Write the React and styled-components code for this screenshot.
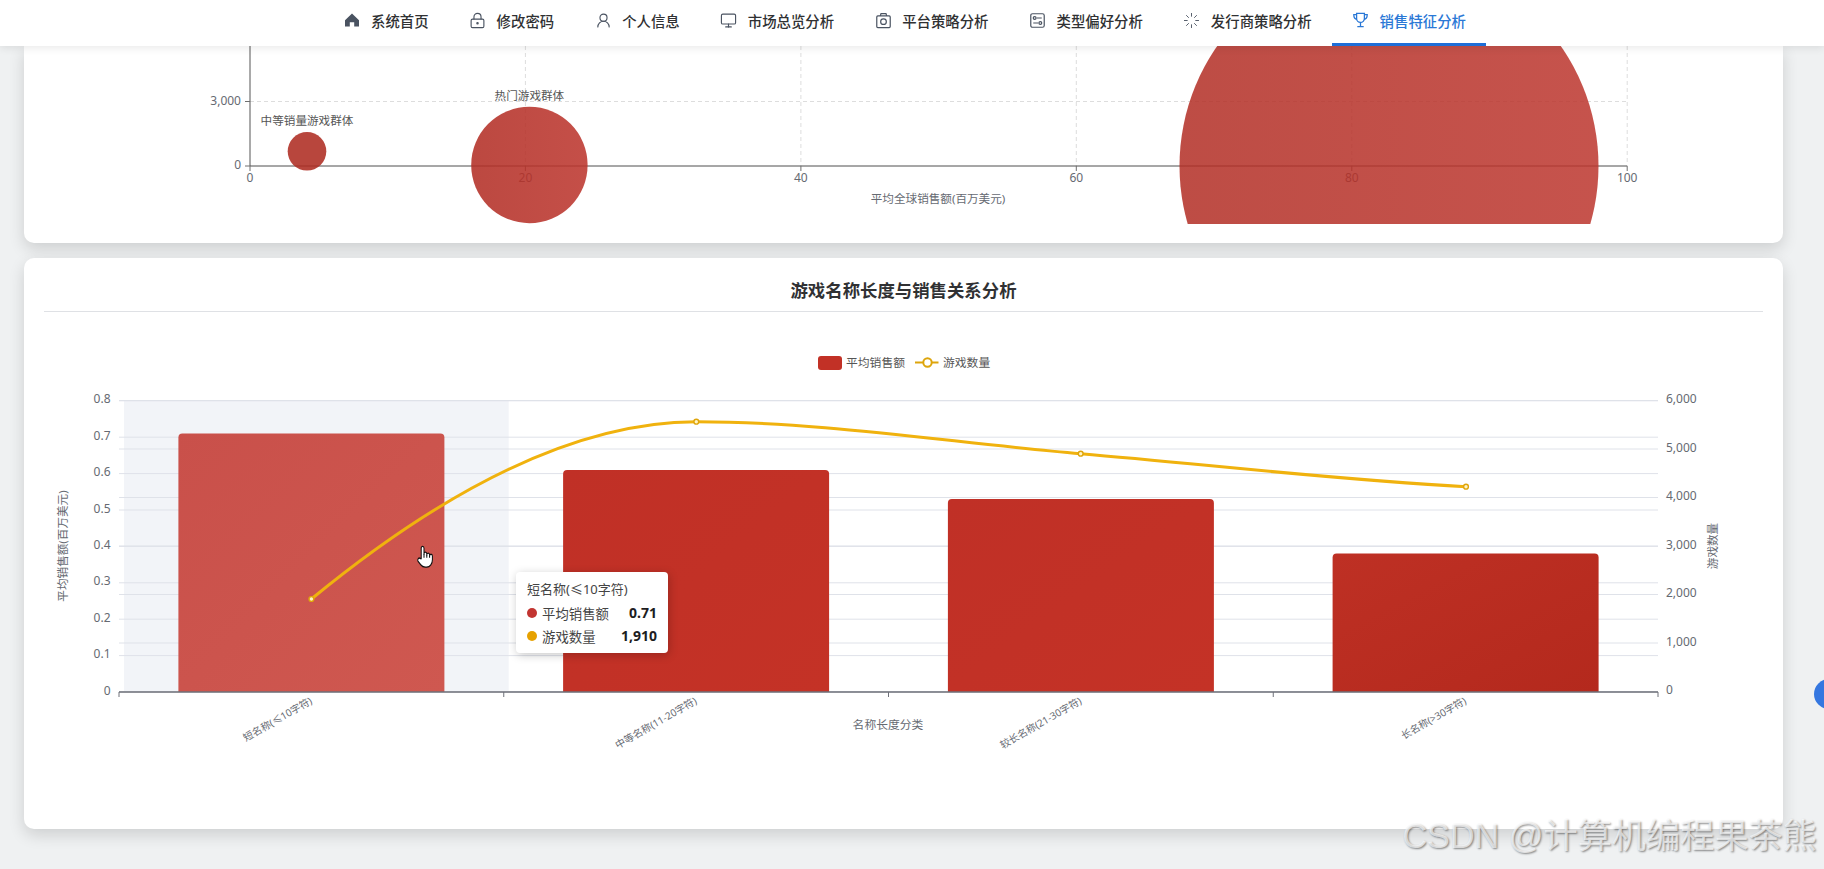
import React from "react"
import styled, { createGlobalStyle } from "styled-components"
import { LockKeyhole, UserRound, Monitor, Loader } from "lucide-react"

const GlobalStyle = createGlobalStyle`
  html, body {
    margin: 0;
    padding: 0;
    background: #eff1f2;
  }
  * {
    box-sizing: border-box;
  }
`
const FONT = `"Noto Sans", "Noto Sans CJK SC", "Liberation Sans", sans-serif`

const Page = styled.div`
  position: relative;
  height: 869px;
  overflow: hidden;
  background: #eff1f2;
  font-family: ${FONT};
`
const TopNav = styled.nav`
  position: relative;
  z-index: 2;
  display: flex;
  justify-content: center;
  height: 46px;
  padding-right: 15px;
  background: #fff;
  box-shadow: 0 2px 8px rgba(0, 0, 0, 0.09);
`
const NavItem = styled.a`
  display: flex;
  align-items: center;
  gap: 8px;
  padding: 0 20px 3px;
  font-size: 14.4px;
  font-weight: 500;
  white-space: nowrap;
  color: ${(p) => (p.$active ? "#2a78d6" : "#303133")};
  border-bottom: 3px solid ${(p) => (p.$active ? "#1e6ed8" : "transparent")};
`
const NavIcon = styled.span`
  display: flex;
  align-items: center;
  justify-content: center;
  width: 20px;
  height: 20px;
  margin-left: -1px;
  margin-right: 1px;
  color: ${(p) => (p.$active ? "#2a78d6" : "#4a5361")};
`
const Content = styled.main`
  display: flex;
  flex-direction: column;
  gap: 15px;
  margin: 0 41px 0 24px;
`
const Card = styled.section`
  background: #fff;
  border-radius: 10px;
  box-shadow: 0 6px 16px rgba(0, 0, 0, 0.14);
`
const ScrolledCard = styled(Card)`
  height: 197px;
  border-radius: 0 0 10px 10px;
`
const ReportCard = styled(Card)`
  height: 571px;
  padding: 20px 20px 0;
`
const CardTitle = styled.h2`
  margin: 0;
  height: 34px;
  font-size: 17.4px;
  line-height: 24px;
  font-weight: 700;
  text-align: center;
  color: #303133;
  border-bottom: 1px solid #dfe1e5;
`
const ChartFrame = styled.div`
  position: relative;
`
const ChartSvg = styled.svg`
  display: block;
  width: 100%;
  font-family: ${FONT};
`
const AxisText = styled.text`
  font-size: 12px;
  fill: #666a72;
`
const Tooltip = styled.div`
  position: absolute;
  left: 472px;
  top: 260px;
  width: 152px;
  height: 81px;
  padding: 8px 11px;
  background: #fff;
  border-radius: 4px;
  box-shadow: 1px 2px 10px rgba(0, 0, 0, 0.22);
  color: #444;
`
const TooltipTitle = styled.div`
  font-size: 13px;
  line-height: 18px;
  margin-bottom: 3px;
`
const TooltipRow = styled.div`
  display: flex;
  align-items: center;
  height: 23px;
  font-size: 13.4px;
`
const Dot = styled.i`
  width: 10px;
  height: 10px;
  margin-right: 5px;
  border-radius: 50%;
  background: ${(p) => p.$color};
`
const TooltipValue = styled.b`
  margin-left: auto;
  font-size: 14px;
  color: #1d1d1f;
`
const FloatButton = styled.div`
  position: absolute;
  left: 1814px;
  top: 679px;
  width: 30px;
  height: 30px;
  border-radius: 50%;
  background: #3577e0;
`
const Watermark = styled.div`
  position: absolute;
  right: 7px;
  top: 815px;
  font-size: 34.2px;
  line-height: 42px;
  white-space: nowrap;
  font-family: "Liberation Sans", "Noto Sans CJK SC", sans-serif;
  color: rgba(255, 255, 255, 0.66);
  text-shadow: 1px 1px 2px rgba(0, 0, 0, 0.45);
`

const HomeIcon = () => (
  <svg width="16" height="16" viewBox="0 0 16 16" fill="currentColor">
    <path d="M8 1.6 15 8.2V14.4H10.2V10.2H5.8V14.4H1V8.2Z" />
  </svg>
)
const CameraIcon = () => (
  <svg width="17" height="17" viewBox="0 0 24 24" fill="none" stroke="currentColor" strokeWidth="1.7">
    <rect x="2.5" y="5.5" width="19" height="16.5" rx="1.5" />
    <path d="M7.5 5.5 8.5 2.2H15.5L16.5 5.5" />
    <circle cx="12" cy="13.6" r="4" />
  </svg>
)
const SlidersIcon = () => (
  <svg width="17" height="17" viewBox="0 0 24 24" fill="none" stroke="currentColor" strokeWidth="1.7">
    <rect x="2.5" y="2.5" width="19" height="19" rx="2.5" />
    <circle cx="8" cy="8.5" r="2" />
    <path d="M11 8.5H18M6 15.5H13" />
    <circle cx="16" cy="15.5" r="2" />
  </svg>
)
const TrophyIcon = () => (
  <svg width="17" height="18" viewBox="0 0 24 24" fill="none" stroke="currentColor" strokeWidth="1.8">
    <path d="M6.5 2.5H17.5V10A5.5 5.5 0 0 1 6.5 10Z" />
    <path d="M6.5 4.5H2.5C2.5 8.5 3.8 10.5 7 11M17.5 4.5H21.5C21.5 8.5 20.2 10.5 17 11" />
    <path d="M12 15.5V21.5M7.5 21.5H16.5" />
  </svg>
)

const menu = [
  { label: "系统首页", icon: <HomeIcon /> },
  { label: "修改密码", icon: <LockKeyhole size={17} strokeWidth={1.6} /> },
  { label: "个人信息", icon: <UserRound size={17} strokeWidth={1.6} /> },
  { label: "市场总览分析", icon: <Monitor size={17} strokeWidth={1.6} /> },
  { label: "平台策略分析", icon: <CameraIcon /> },
  { label: "类型偏好分析", icon: <SlidersIcon /> },
  { label: "发行商策略分析", icon: <Loader size={17} strokeWidth={1.3} /> },
  { label: "销售特征分析", icon: <TrophyIcon />, active: true },
]

// both charts draw in page pixels, the viewBox just moves them into the card
const BubbleChart = () => (
  <ChartSvg viewBox="24 46 1759 178" height="178">
    <defs>
      <linearGradient id="bubble" x1="0" y1="0" x2="1" y2="0">
        <stop offset="0" stopColor="#b22d24" />
        <stop offset="1" stopColor="#bc352d" />
      </linearGradient>
    </defs>
    {[525.4, 800.9, 1076.3, 1351.8, 1627.2].map((x) => (
      <line key={x} x1={x} x2={x} y1="46" y2="166" stroke="#dddddd" strokeDasharray="4 3" />
    ))}
    <line x1="250" x2="1627" y1="101.5" y2="101.5" stroke="#dddddd" strokeDasharray="4 3" />
    <line x1="250" x2="250" y1="46" y2="166" stroke="#555" />
    <line x1="245" x2="250" y1="101.5" y2="101.5" stroke="#6e6e6e" />
    <line x1="245" x2="250" y1="166" y2="166" stroke="#6e6e6e" />
    <line x1="250" x2="1627" y1="166" y2="166" stroke="#4e4e4e" />
    {[250, 525.4, 800.9, 1076.3, 1351.8, 1627.2].map((x) => (
      <line key={x} x1={x} x2={x} y1="166" y2="171" stroke="#6e6e6e" />
    ))}
    <AxisText x="241" y="105" textAnchor="end">3,000</AxisText>
    <AxisText x="241" y="169" textAnchor="end">0</AxisText>
    {[0, 20, 40, 60, 80, 100].map((v, i) => (
      <AxisText key={v} x={250 + i * 275.44} y="182" textAnchor="middle">{v}</AxisText>
    ))}
    <AxisText x="938" y="203" textAnchor="middle" style={{ fontSize: 11.6 }}>平均全球销售额(百万美元)</AxisText>
    <circle cx="307" cy="151.3" r="19.3" fill="#ae2b20" fillOpacity="0.87" />
    <circle cx="529.4" cy="165" r="58.2" fill="url(#bubble)" fillOpacity="0.87" />
    <circle cx="1389" cy="166" r="209.5" fill="url(#bubble)" fillOpacity="0.85" />
    <AxisText x="307" y="125" textAnchor="middle" style={{ fontSize: 11.6, fill: "#555" }}>中等销量游戏群体</AxisText>
    <AxisText x="529.4" y="100" textAnchor="middle" style={{ fontSize: 11.6, fill: "#555" }}>热门游戏群体</AxisText>
  </ChartSvg>
)

const leftTicks = ["0", "0.1", "0.2", "0.3", "0.4", "0.5", "0.6", "0.7", "0.8"]
const rightTicks = ["0", "1,000", "2,000", "3,000", "4,000", "5,000", "6,000"]
const baseY = 693
const leftY = (i) => baseY - i * 36.4
const rightY = (i) => 692.5 - i * 48.5

const bars = [
  { x: 178.4, top: 434.5, fill: "url(#barHover)", label: "短名称(≤10字符)", tick: 311.4 },
  { x: 563.1, top: 471, fill: "url(#barMid)", label: "中等名称(11-20字符)", tick: 696.1 },
  { x: 947.9, top: 500, fill: "url(#barMid)", label: "较长名称(21-30字符)", tick: 1080.9 },
  { x: 1332.6, top: 554.5, fill: "url(#barDark)", label: "长名称(>30字符)", tick: 1465.6 },
]
const points = [
  [311.4, 600],
  [696.3, 422.7],
  [1080.7, 454.7],
  [1466, 487.7],
]
const barPath = (x, top) =>
  `M${x} ${baseY}V${top + 4}q0-4 4-4H${x + 262}q4 0 4 4V${baseY}Z`

const SalesChart = () => (
  <ChartSvg viewBox="44 313 1719 516" height="516">
    <defs>
      <linearGradient id="barHover" x1="0" y1="0" x2="1" y2="1">
        <stop offset="0" stopColor="#c9504a" />
        <stop offset="1" stopColor="#cf5850" />
      </linearGradient>
      <linearGradient id="barMid" x1="0" y1="0" x2="1" y2="1">
        <stop offset="0" stopColor="#c03026" />
        <stop offset="1" stopColor="#c43226" />
      </linearGradient>
      <linearGradient id="barDark" x1="0" y1="0" x2="1" y2="1">
        <stop offset="0" stopColor="#be3024" />
        <stop offset="1" stopColor="#b4291d" />
      </linearGradient>
    </defs>
    <rect x="124" y="402" width="384.7" height="291" fill="#f2f4f8" />
    {leftTicks.map((t, i) => (
      <line key={t} x1="119" x2="1658" y1={leftY(i)} y2={leftY(i)} stroke="#dfe2e9" />
    ))}
    {rightTicks.map((t, i) => (
      <line key={t} x1="119" x2="1658" y1={rightY(i)} y2={rightY(i)} stroke="#dfe2e9" />
    ))}
    {bars.map((b) => (
      <path key={b.label} d={barPath(b.x, b.top)} fill={b.fill} />
    ))}
    <line x1="119" x2="1658" y1={baseY} y2={baseY} stroke="#6e7079" strokeWidth="1.4" />
    {[119, 503.75, 888.5, 1273.25, 1658].map((x) => (
      <line key={x} x1={x} x2={x} y1={baseY} y2={baseY + 5} stroke="#6e7079" />
    ))}
    {leftTicks.map((t, i) => (
      <AxisText key={t} x="110.5" y={leftY(i) + 2.5} textAnchor="end">{t}</AxisText>
    ))}
    {rightTicks.map((t, i) => (
      <AxisText key={t} x="1666" y={rightY(i) + 2.5}>{t}</AxisText>
    ))}
    <AxisText transform="translate(67 547) rotate(-90)" textAnchor="middle" style={{ fontSize: 11.6 }}>
      平均销售额(百万美元)
    </AxisText>
    <AxisText transform="translate(1717 547) rotate(-90)" textAnchor="middle" style={{ fontSize: 11.6 }}>
      游戏数量
    </AxisText>
    <AxisText x="888" y="730" textAnchor="middle" style={{ fontSize: 11.8 }}>名称长度分类</AxisText>
    {bars.map((b) => (
      <AxisText
        key={b.label}
        transform={`translate(${b.tick + 1.5} 704) rotate(-30)`}
        textAnchor="end"
        style={{ fontSize: 10 }}
      >
        {b.label}
      </AxisText>
    ))}

    <path
      d="M311.4 600C438 496 570 422.7 696.3 422.7C824 422.7 952.7 443.9 1080.7 454.7C1208 465.5 1338 481 1466 487.7"
      fill="none"
      stroke="#f0b20e"
      strokeWidth="3"
    />
    {points.map(([x, y]) => (
      <circle key={x} cx={x} cy={y} r="2.4" fill="#fff3c4" stroke="#dfa50c" strokeWidth="1.4" />
    ))}

    <rect x="818" y="357" width="24" height="14" rx="3" fill="#c23126" />
    <AxisText x="846" y="368" style={{ fontSize: 11.8, fill: "#555" }}>平均销售额</AxisText>
    <line x1="915" x2="938.5" y1="363.5" y2="363.5" stroke="#dda50c" strokeWidth="2" />
    <circle cx="927.5" cy="363.5" r="4.2" fill="#fff" stroke="#dda50c" strokeWidth="2" />
    <AxisText x="943" y="368" style={{ fontSize: 11.8, fill: "#555" }}>游戏数量</AxisText>

    <g transform="translate(416 545) scale(0.8 1.05)" stroke="#111" strokeWidth="1.3" strokeLinejoin="round">
      <path
        fill="#fff"
        d="M6.5 14V4a1.75 1.75 0 0 1 3.5 0v5.5a1.7 1.7 0 0 1 3.5 0v1a1.7 1.7 0 0 1 3.5 0v1a1.7 1.7 0 0 1 3.5 0V15a7 7 0 0 1-7 7h-2c-2.6 0-4.2-.8-5.6-2.2l-3.4-3.4a1.9 1.9 0 0 1 2.7-2.6Z"
      />
      <path fill="none" d="M10 9.5V13M13.5 10.5V13M17 11.5V13" />
    </g>
  </ChartSvg>
)

const App = () => (
  <Page>
    <GlobalStyle />
    <TopNav>
      {menu.map((m) => (
        <NavItem key={m.label} $active={m.active}>
          <NavIcon $active={m.active}>{m.icon}</NavIcon>
          {m.label}
        </NavItem>
      ))}
    </TopNav>
    <Content>
      <ScrolledCard>
        <BubbleChart />
      </ScrolledCard>
      <ReportCard>
        <CardTitle>游戏名称长度与销售关系分析</CardTitle>
        <ChartFrame>
          <SalesChart />
          <Tooltip>
            <TooltipTitle>短名称(≤10字符)</TooltipTitle>
            <TooltipRow>
              <Dot $color="#c23531" />
              平均销售额
              <TooltipValue>0.71</TooltipValue>
            </TooltipRow>
            <TooltipRow>
              <Dot $color="#e6a100" />
              游戏数量
              <TooltipValue>1,910</TooltipValue>
            </TooltipRow>
          </Tooltip>
        </ChartFrame>
      </ReportCard>
    </Content>
    <FloatButton />
    <Watermark>CSDN @计算机编程果茶熊</Watermark>
  </Page>
)

export default App
